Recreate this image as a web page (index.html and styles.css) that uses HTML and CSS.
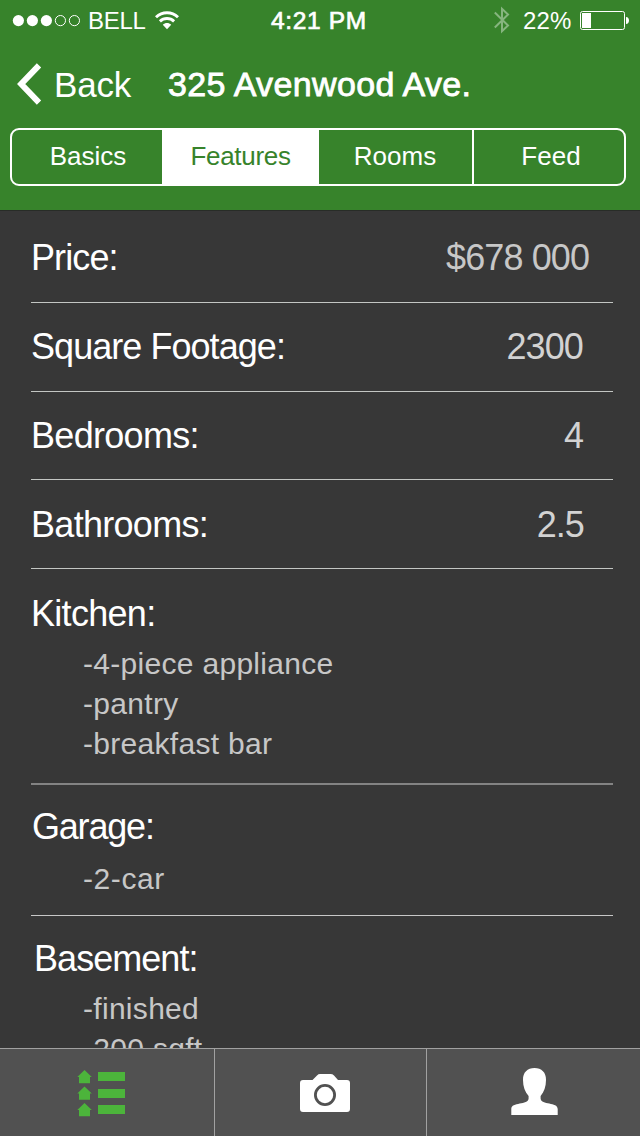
FILE: index.html
```
<!DOCTYPE html>
<html lang="en">
<head>
<meta charset="utf-8">
<title>325 Avenwood Ave.</title>
<link rel="stylesheet" href="styles.css">
</head>
<body>
<div class="screen">
  <header class="header">
    <div class="status">
      <div class="status-left">
        <svg class="signal" width="70" height="15" viewBox="0 0 70 15"><g fill="#fff"><circle cx="6.4" cy="7.6" r="5.6"/><circle cx="20.4" cy="7.6" r="5.6"/><circle cx="34.4" cy="7.6" r="5.6"/></g><g fill="none" stroke="#fff" stroke-width="1"><circle cx="48.4" cy="7.6" r="5.1"/><circle cx="62.4" cy="7.6" r="5.1"/></g></svg>
        <span class="carrier">BELL</span>
        <svg class="wifi" width="24" height="19" viewBox="0 0 24 19"><g fill="none" stroke="#fff" stroke-width="2.9"><path d="M1 6.3C7.2.3 16.8.3 23 6.3"/><path d="M4.9 10.4C8.9 6.6 15.1 6.6 19.1 10.4"/></g><path d="M7.8 13.7C10.2 11.4 13.8 11.4 16.2 13.7L12 18.3Z" fill="#fff"/></svg>
      </div>
      <span class="time">4:21 PM</span>
      <div class="status-right">
        <svg class="bluetooth" width="16" height="28" viewBox="0 0 16 28"><path d="M.8 6.5L14 19.5L8 25.2V2.8L14 8.5L.8 21.5" fill="none" stroke="#86b57f" stroke-width="2"/></svg>
        <span class="percent">22%</span>
        <svg class="battery" width="50" height="19" viewBox="0 0 50 19"><rect x=".5" y=".5" width="44" height="18" rx="2" fill="none" stroke="#fff"/><rect x="2" y="2" width="9" height="15" fill="#fff"/><path d="M46 6C50 6 50 13 46 13Z" fill="#fff"/></svg>
      </div>
    </div>
    <div class="nav">
      <svg class="chevron" width="26" height="42" viewBox="0 0 26 42"><path d="M22 2.4L4.2 21L22 39.6" fill="none" stroke="#fff" stroke-width="6"/></svg>
      <span class="back">Back</span>
      <h1 class="title">325 Avenwood Ave.</h1>
    </div>
    <div class="tabs">
      <span class="tab basics">Basics</span>
      <span class="tab active">Features</span>
      <span class="tab rooms">Rooms</span>
      <span class="tab feed">Feed</span>
    </div>
  </header>
  <main class="content">
    <section class="row price"><span class="label">Price:</span><span class="value">$678 000</span></section>
    <section class="row"><span class="label footage">Square Footage:</span><span class="value">2300</span></section>
    <section class="row bedrooms"><span class="label">Bedrooms:</span><span class="value">4</span></section>
    <section class="row bathrooms"><span class="label">Bathrooms:</span><span class="value">2.5</span></section>
    <section class="group kitchen">
      <h2 class="label">Kitchen:</h2>
      <ul class="items"><li>-4-piece appliance</li><li>-pantry</li><li>-breakfast bar</li></ul>
    </section>
    <section class="group garage">
      <h2 class="label">Garage:</h2>
      <ul class="items"><li>-2-car</li></ul>
    </section>
    <section class="group basement">
      <h2 class="label">Basement:</h2>
      <ul class="items"><li>-finished</li><li>-200 sqft</li></ul>
    </section>
  </main>
  <footer class="tabbar">
    <div class="tool list">
      <svg width="49" height="48" viewBox="0 0 49 48" fill="#4cb43b"><path d="M7.5 1L14.8 8H13V14.3H2V8H.3Z"/><path d="M7.5 17.5L14.8 24.5H13V30.8H2V24.5H.3Z"/><path d="M7.5 34L14.8 41H13V47.3H2V41H.3Z"/><path d="M21 3H48V12H21ZM21 20H48V29H21ZM21 36H48V45H21Z"/></svg>
    </div>
    <div class="tool camera">
      <svg width="50" height="38" viewBox="0 0 50 38"><path d="M3 6H12.5L17 1.4Q18.4 0 20 0H30.5Q32.5 0 34 1.4L38 6H47Q50 6 50 9V35Q50 38 47 38H3Q0 38 0 35V9Q0 6 3 6Z" fill="#fff"/><circle cx="25" cy="21" r="9.6" fill="none" stroke="#515151" stroke-width="2.8"/></svg>
    </div>
    <div class="tool person">
      <svg width="47" height="47" viewBox="0 0 47 47"><path d="M23.5 0C30.5 0 35.2 4.4 35 12C35 18.5 33 24 29.6 28V30.5C30.2 37.5 46.7 33.5 46.7 41V47H.3V41C.3 33.5 17 37.5 17.6 30.5V28C14 24 12 18.5 12 12C11.8 4.4 16.5 0 23.5 0Z" fill="#fff"/></svg>
    </div>
  </footer>
</div>
</body>
</html>
```

FILE: styles.css
```
* { box-sizing: border-box; }
body { margin: 0; font-family: "Liberation Sans", Arial, sans-serif; }
h1, h2, ul { margin: 0; padding: 0; font-weight: 400; list-style: none; }
svg { display: block; flex: none; }
.screen { width: 640px; height: 1136px; display: flex; flex-direction: column; overflow: hidden; background: #373737; color: #fff; white-space: nowrap; }
.header { flex: none; height: 211px; background: #37832b; border-bottom: 1px solid #282c27; }

.status { display: flex; height: 42px; line-height: 41px; font-size: 24px; }
.status-left { display: flex; width: 271px; padding-left: 12px; }
.signal { margin-top: 13px; }
.carrier { margin-left: 6px; width: 67px; letter-spacing: -.3px; }
.wifi { margin-top: 11px; }
.time { width: 223px; font-size: 24.5px; letter-spacing: .65px; -webkit-text-stroke: .7px #fff; }
.status-right { display: flex; }
.bluetooth { margin: 6px 0 0 0; }
.percent { margin-left: 13px; width: 57px; letter-spacing: .1px; }
.battery { margin-top: 11px; }

.nav { display: flex; height: 86px; line-height: 85px; font-size: 35px; }
.chevron { margin: 21px 0 0 17px; }
.back { width: 114px; margin-left: 11px; letter-spacing: -.2px; }
.title { font-size: 34px; -webkit-text-stroke: .8px #fff; letter-spacing: .35px; }

.tabs { display: grid; grid-template-columns: 150px 157px 153px 152px; width: 616px; height: 58px; margin-left: 10px; border: 2px solid #fff; border-radius: 9px; line-height: 53px; font-size: 26px; text-align: center; }
.active { background: #fff; color: #37832b; letter-spacing: -.3px; }
.basics { padding-left: 2px; }
.rooms { padding-right: 1px; }
.feed { border-left: 2px solid #fff; padding-left: 4px; }

.content { flex: 1; min-height: 0; overflow: hidden; padding: 0 27px 0 31px; }
.row { display: flex; justify-content: space-between; align-items: center; height: 89px; padding-right: 30px; border-bottom: 1px solid #c3c6c3; }
.price { height: 92px; padding-right: 24px; padding-top: 2px; }
.bedrooms { height: 88px; }
.bathrooms { padding-top: 2px; padding-right: 29px; }
.label { margin-left: 0; font-size: 36px; line-height: 44px; letter-spacing: -.7px; }
.footage { letter-spacing: -.95px; }
.price .label { letter-spacing: -.9px; }
.value { font-size: 36px; line-height: 44px; letter-spacing: -.9px; color: #d2d2d2; }
.price .value { color: #c7c7c7; }
.items { padding-left: 52px; font-size: 30px; line-height: 40px; letter-spacing: .3px; color: #c7c7c7; }
.kitchen { height: 216px; padding-top: 23px; border-bottom: 2px solid #838383; }
.kitchen .items { margin-top: 8px; }
.garage { height: 131px; padding-top: 20px; border-bottom: 1px solid #c7c7c7; }
.garage .label { margin-left: 1px; letter-spacing: -1.2px; }
.garage .items { margin-top: 10px; letter-spacing: .6px; }
.basement { padding-top: 21px; }
.basement .label { margin-left: 3px; letter-spacing: -.95px; }
.basement .items { margin-top: 8px; }

.tabbar { flex: none; display: grid; grid-template-columns: 215px 212px 213px; height: 88px; border-top: 1px solid #a1a1a1; background: #515151; }
.tool { border-right: 1px solid #a1a1a1; }
.list { padding: 20px 0 0 77px; }
.camera { padding: 25px 0 0 85px; }
.person { padding: 19px 0 0 84px; border-right: 0; }
```
